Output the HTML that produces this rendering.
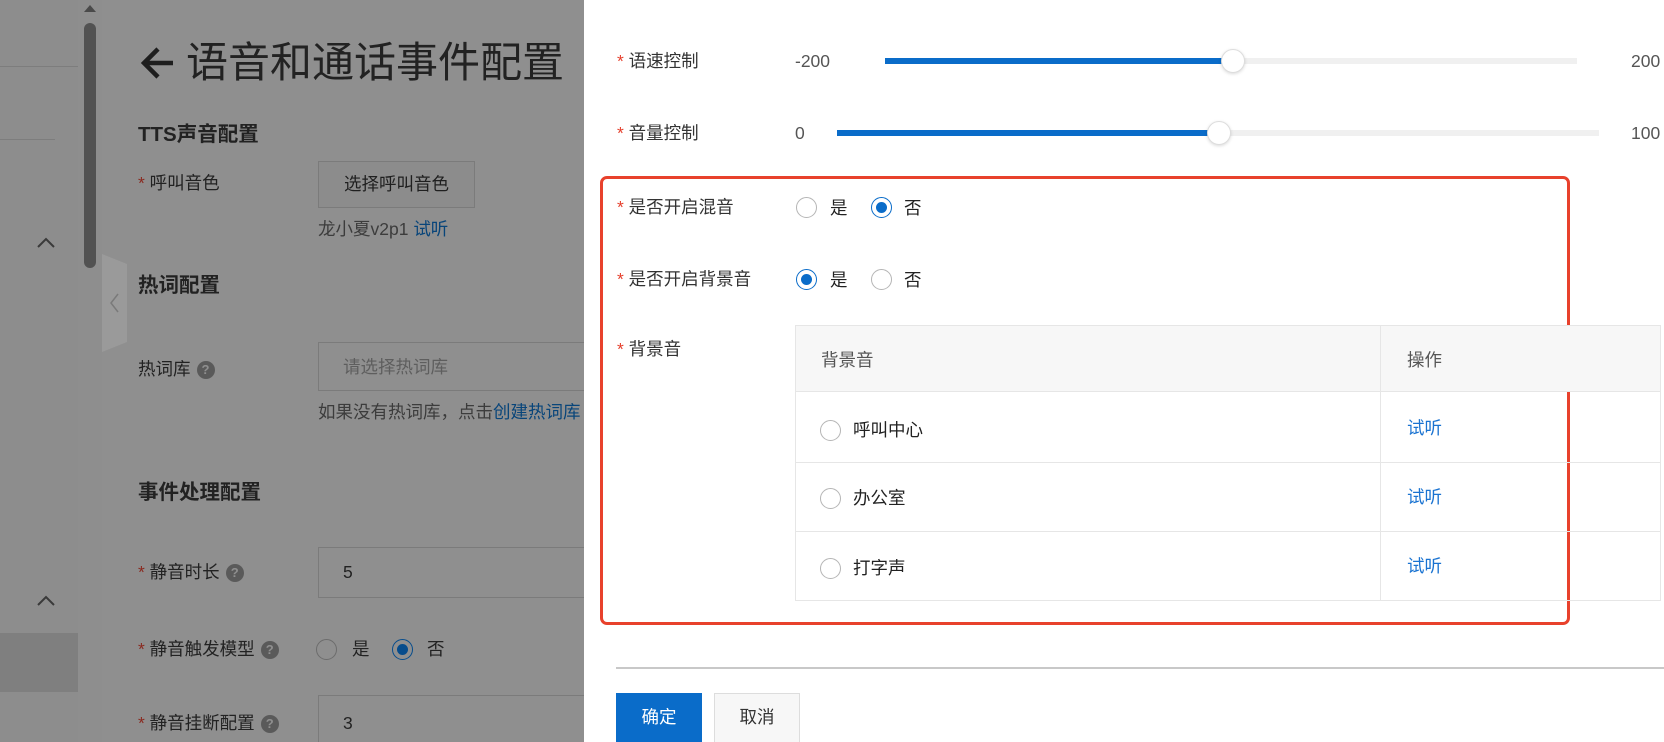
<!DOCTYPE html>
<html><head><meta charset="utf-8"><style>
*{margin:0;padding:0;box-sizing:border-box}
html,body{width:1664px;height:742px;overflow:hidden}
body{font-family:"Liberation Sans","Noto Sans CJK SC",sans-serif;color:#1f1f1f}
#w{position:relative;width:1664px;height:742px;overflow:hidden;background:#8f8f8f}
.a{position:absolute;white-space:nowrap}
.s{color:#8a2a20}
.dk{color:#222}
.inp{position:absolute;border:1px solid #7b7b7b}
.q{display:inline-block;width:18px;height:18px;border-radius:50%;background:#5a5a5a;color:#8f8f8f;font-size:13px;font-weight:bold;text-align:center;line-height:18px;vertical-align:middle;margin-left:6px}
.d{position:absolute;left:584px;top:0;width:1080px;height:742px;background:#fff}
.r{color:#e5402d}
.lab{font-size:17.5px;color:#333;line-height:24px}
.rad{position:absolute;width:21px;height:21px;border-radius:50%;border:1px solid #b5b5b5;background:#fff}
.rad.on{border:1.5px solid #0a6cc9}
.rad.on::after{content:"";position:absolute;left:3.5px;top:3.5px;width:11px;height:11px;border-radius:50%;background:#0a6cc9}
.dr{position:absolute;width:21px;height:21px;border-radius:50%;border:1px solid #6c6c6c}
.dr.on{border:1.5px solid #064c8c}
.dr.on::after{content:"";position:absolute;left:3.5px;top:3.5px;width:11px;height:11px;border-radius:50%;background:#064c8c}
.thumb{position:absolute;width:24px;height:24px;border-radius:50%;background:#fff;border:1px solid #ddd;box-shadow:0 1px 3px rgba(0,0,0,.15)}
.link{color:#1a73d1}
.lt{font-size:17.5px;line-height:24px}
.h{font-size:20.5px;font-weight:bold;line-height:26px;color:#222}
</style></head><body><div id="w">
<!-- left sidebar -->
<div class="a" style="left:0;top:0;width:78px;height:742px;background:#8d8d8d"></div>
<div class="a" style="left:0;top:66px;width:78px;height:1px;background:#7d7d7d"></div>
<div class="a" style="left:0;top:139px;width:55px;height:1px;background:#7d7d7d"></div>
<div class="a" style="left:0;top:633px;width:78px;height:59px;background:#7f7f7f"></div>
<svg class="a" style="left:36px;top:236px" width="20" height="14"><path d="M2 11 L10 3 L18 11" stroke="#3a3a3a" stroke-width="2" fill="none"/></svg>
<svg class="a" style="left:36px;top:594px" width="20" height="14"><path d="M2 11 L10 3 L18 11" stroke="#3a3a3a" stroke-width="2" fill="none"/></svg>
<!-- scrollbar -->
<div class="a" style="left:78px;top:0;width:24px;height:742px;background:#8e8e8e"></div>
<svg class="a" style="left:83px;top:3px" width="14" height="10"><path d="M1 9 L7 2 L13 9Z" fill="#4a4a4a"/></svg>
<div class="a" style="left:84px;top:23px;width:12px;height:245px;border-radius:6px;background:#525252"></div>
<!-- collapse tab -->
<svg class="a" style="left:102px;top:254px" width="25" height="98"><path d="M0 0 L25 10 L25 88 L0 98Z" fill="#9a9a9a"/><path d="M16 40 L9 49 L16 58" stroke="#7a7a7a" stroke-width="1.5" fill="none"/></svg>
<!-- title -->
<svg class="a" style="left:140px;top:46px" width="36" height="34"><path d="M33 17 H5 M18 3 L4 17 L18 31" stroke="#1e1e1e" stroke-width="4.5" fill="none"/></svg>
<div class="a dk" style="left:186px;top:35px;font-size:42px;line-height:56px">语音和通话事件配置</div>
<div class="a h" style="left:138px;top:122px">TTS声音配置</div>
<div class="a dk lt" style="left:138px;top:171px"><span class="s">*</span> 呼叫音色</div>
<div class="a" style="left:318px;top:161px;width:157px;height:47px;border:1px solid #7b7b7b;background:#8c8c8c;font-size:17.5px;text-align:center;line-height:45px">选择呼叫音色</div>
<div class="a lt" style="left:318px;top:217px;color:#3c3c3c">龙小夏v2p1 <span style="color:#08457a">试听</span></div>
<div class="a h" style="left:138px;top:273px">热词配置</div>
<div class="a dk lt" style="left:138px;top:357px">热词库<span class="q">?</span></div>
<div class="inp" style="left:318px;top:342px;width:290px;height:49px"></div>
<div class="a lt" style="left:343px;top:355px;color:#5e5e5e">请选择热词库</div>
<div class="a lt" style="left:318px;top:400px;color:#3c3c3c">如果没有热词库，点击<span style="color:#08457a">创建热词库</span></div>
<div class="a h" style="left:138px;top:480px">事件处理配置</div>
<div class="a dk lt" style="left:138px;top:560px"><span class="s">*</span> 静音时长<span class="q">?</span></div>
<div class="inp" style="left:318px;top:547px;width:290px;height:51px"></div>
<div class="a dk lt" style="left:343px;top:560px">5</div>
<div class="a dk lt" style="left:138px;top:637px"><span class="s">*</span> 静音触发模型<span class="q">?</span></div>
<div class="dr" style="left:316px;top:639px"></div>
<div class="a dk lt" style="left:352px;top:637px">是</div>
<div class="dr on" style="left:392px;top:639px"></div>
<div class="a dk lt" style="left:427px;top:637px">否</div>
<div class="a dk lt" style="left:138px;top:711px"><span class="s">*</span> 静音挂断配置<span class="q">?</span></div>
<div class="inp" style="left:318px;top:695px;width:290px;height:47px;border-bottom:none"></div>
<div class="a dk lt" style="left:343px;top:711px">3</div>

<!-- drawer -->
<div class="d"></div>
<div class="a lab" style="left:617px;top:49px"><span class="r">*</span> 语速控制</div>
<div class="a lab" style="left:795px;top:49px;color:#555">-200</div>
<div class="a" style="left:885px;top:58px;width:692px;height:6px;background:#f0f0f0"></div>
<div class="a" style="left:885px;top:58px;width:348px;height:6px;background:#0a6cc9"></div>
<div class="thumb" style="left:1221px;top:49px"></div>
<div class="a lab" style="left:1631px;top:49px;color:#555">200</div>

<div class="a lab" style="left:617px;top:121px"><span class="r">*</span> 音量控制</div>
<div class="a lab" style="left:795px;top:121px;color:#555">0</div>
<div class="a" style="left:837px;top:130px;width:762px;height:6px;background:#f0f0f0"></div>
<div class="a" style="left:837px;top:130px;width:382px;height:6px;background:#0a6cc9"></div>
<div class="thumb" style="left:1207px;top:121px"></div>
<div class="a lab" style="left:1631px;top:121px;color:#555">100</div>

<div class="a" style="left:600px;top:176px;width:970px;height:449px;border:3px solid #e8412c;border-radius:7px"></div>

<div class="a lab" style="left:617px;top:195px"><span class="r">*</span> 是否开启混音</div>
<div class="rad" style="left:796px;top:197px"></div>
<div class="a lab" style="left:830px;top:196px;color:#222">是</div>
<div class="rad on" style="left:871px;top:197px"></div>
<div class="a lab" style="left:904px;top:196px;color:#222">否</div>

<div class="a lab" style="left:617px;top:267px"><span class="r">*</span> 是否开启背景音</div>
<div class="rad on" style="left:796px;top:269px"></div>
<div class="a lab" style="left:830px;top:268px;color:#222">是</div>
<div class="rad" style="left:871px;top:269px"></div>
<div class="a lab" style="left:904px;top:268px;color:#222">否</div>

<div class="a lab" style="left:617px;top:337px"><span class="r">*</span> 背景音</div>

<div class="a" style="left:795px;top:325px;width:866px;height:276px;border:1px solid #e6e6e6"></div>
<div class="a" style="left:796px;top:326px;width:864px;height:66px;background:#f7f7f7;border-bottom:1px solid #e6e6e6"></div>
<div class="a" style="left:796px;top:462px;width:864px;height:1px;background:#e6e6e6"></div>
<div class="a" style="left:796px;top:531px;width:864px;height:1px;background:#e6e6e6"></div>
<div class="a" style="left:1380px;top:326px;width:1px;height:274px;background:#e6e6e6"></div>
<div class="a lab" style="left:821px;top:348px;color:#555">背景音</div>
<div class="a lab" style="left:1407px;top:348px;color:#555">操作</div>

<div class="rad" style="left:820px;top:420px"></div>
<div class="a lab" style="left:853px;top:418px;color:#222">呼叫中心</div>
<div class="a lab link" style="left:1407px;top:416px">试听</div>
<div class="rad" style="left:820px;top:488px"></div>
<div class="a lab" style="left:853px;top:486px;color:#222">办公室</div>
<div class="a lab link" style="left:1407px;top:485px">试听</div>
<div class="rad" style="left:820px;top:558px"></div>
<div class="a lab" style="left:853px;top:556px;color:#222">打字声</div>
<div class="a lab link" style="left:1407px;top:554px">试听</div>

<div class="a" style="left:616px;top:667px;width:1048px;height:2px;background:#c8c8c8"></div>
<div class="a" style="left:616px;top:693px;width:86px;height:49px;background:#0a6cc9;color:#fff;font-size:17.5px;text-align:center;line-height:49px">确定</div>
<div class="a" style="left:714px;top:693px;width:86px;height:49px;background:#f7f7f7;border:1px solid #ddd;border-bottom:none;color:#333;font-size:17.5px;text-align:center;line-height:47px">取消</div>
</div></body></html>
